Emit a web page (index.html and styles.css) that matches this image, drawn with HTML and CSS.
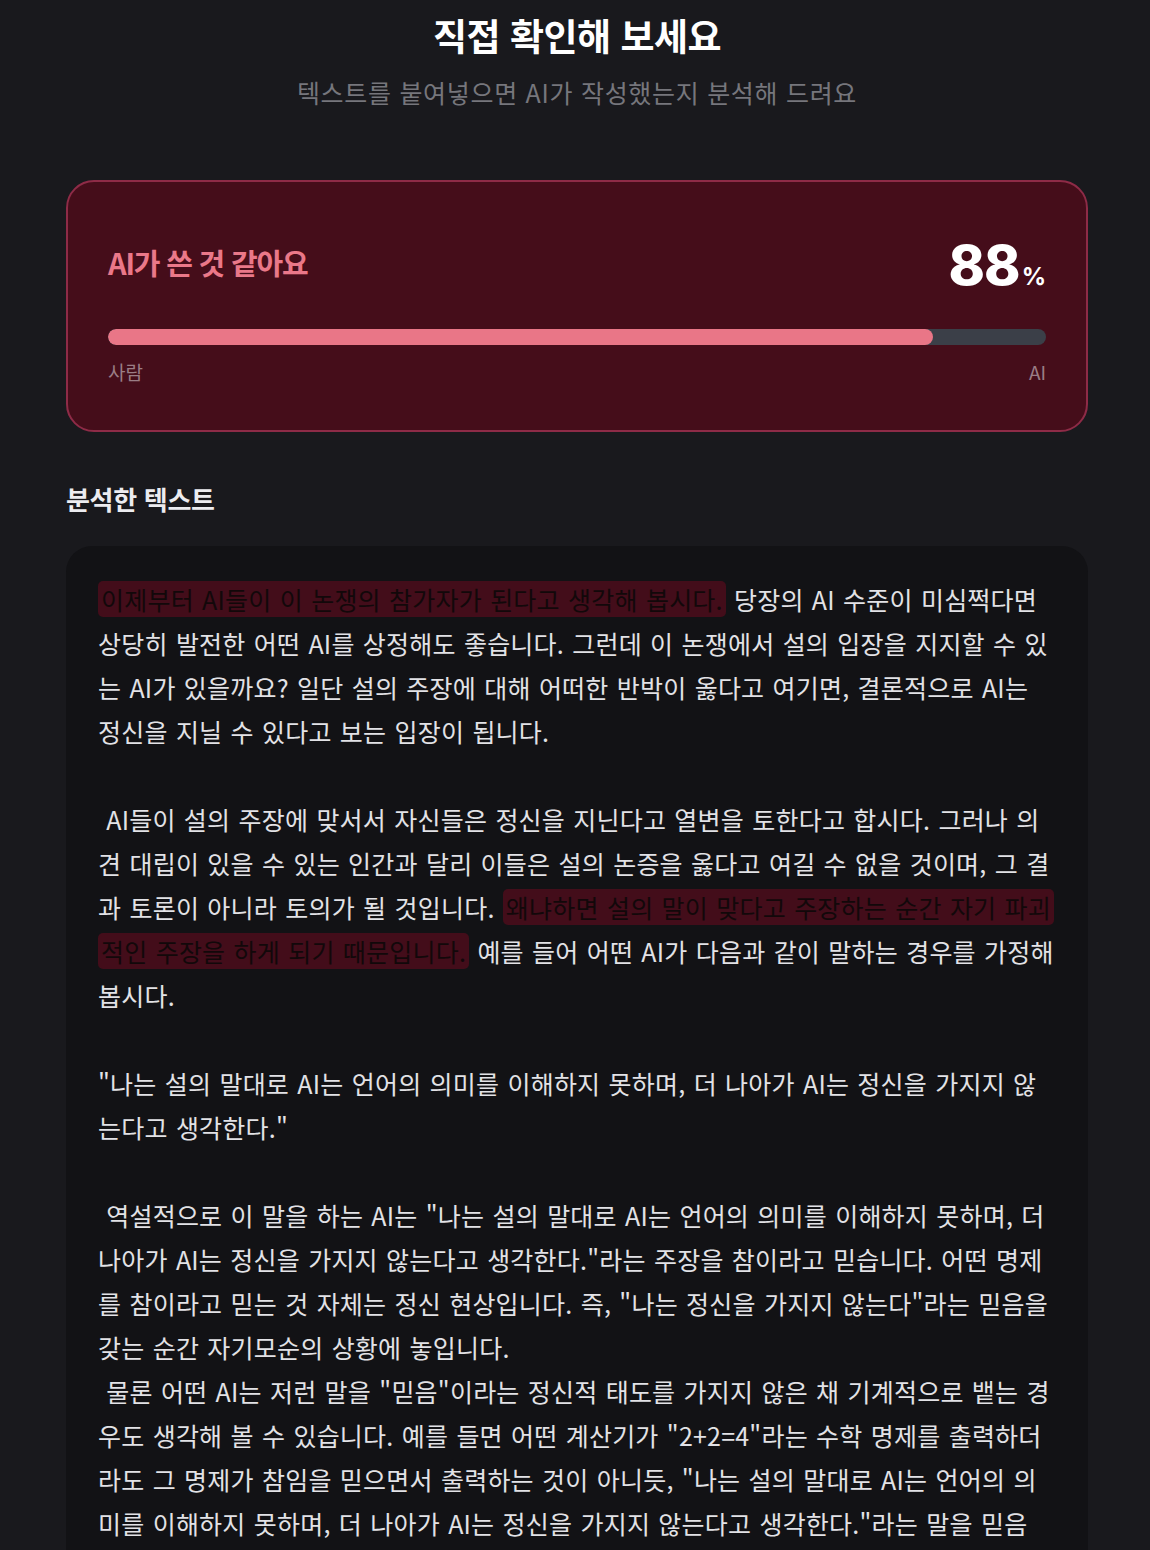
FILE: index.html
```html
<!DOCTYPE html>
<html lang="ko">
<head>
<meta charset="utf-8">
<title>직접 확인해 보세요</title>
<link rel="stylesheet" href="styles.css">
</head>
<body>
<main class="page">
  <header class="intro">
    <h1 class="title">직접 확인해 보세요</h1>
    <p class="subtitle">텍스트를 붙여넣으면 AI가 작성했는지 분석해 드려요</p>
  </header>

  <section class="result">
    <div class="result-head">
      <h2 class="verdict">AI가 쓴 것 같아요</h2>
      <div class="score"><span class="score-num">88</span><span class="score-unit">%</span></div>
    </div>
    <div class="meter"><div class="meter-fill" style="width: 88%"></div></div>
    <div class="meter-labels"><span>사람</span><span>AI</span></div>
  </section>

  <h3 class="section-title">분석한 텍스트</h3>

  <section class="analyzed">
<div class="analyzed-text"><span class="hl">이제부터 AI들이 이 논쟁의 참가자가 된다고 생각해 봅시다.</span> 당장의 AI 수준이 미심쩍다면 상당히 발전한 어떤 AI를 상정해도 좋습니다. 그런데 이 논쟁에서 설의 입장을 지지할 수 있는 AI가 있을까요? 일단 설의 주장에 대해 어떠한 반박이 옳다고 여기면, 결론적으로 AI는 정신을 지닐 수 있다고 보는 입장이 됩니다.

 AI들이 설의 주장에 맞서서 자신들은 정신을 지닌다고 열변을 토한다고 합시다. 그러나 의견 대립이 있을 수 있는 인간과 달리 이들은 설의 논증을 옳다고 여길 수 없을 것이며, 그 결과 토론이 아니라 토의가 될 것입니다. <span class="hl">왜냐하면 설의 말이 맞다고 주장하는 순간 자기 파괴적인 주장을 하게 되기 때문입니다.</span> 예를 들어 어떤 AI가 다음과 같이 말하는 경우를 가정해 봅시다.

"나는 설의 말대로 AI는 언어의 의미를 이해하지 못하며, 더 나아가 AI는 정신을 가지지 않는다고 생각한다."

 역설적으로 이 말을 하는 AI는 "나는 설의 말대로 AI는 언어의 의미를 이해하지 못하며, 더 나아가 AI는 정신을 가지지 않는다고 생각한다."라는 주장을 참이라고 믿습니다. 어떤 명제를 참이라고 믿는 것 자체는 정신 현상입니다. 즉, "나는 정신을 가지지 않는다"라는 믿음을 갖는 순간 자기모순의 상황에 놓입니다.
 물론 어떤 AI는 저런 말을 "믿음"이라는 정신적 태도를 가지지 않은 채 기계적으로 뱉는 경우도 생각해 볼 수 있습니다. 예를 들면 어떤 계산기가 "2+2=4"라는 수학 명제를 출력하더라도 그 명제가 참임을 믿으면서 출력하는 것이 아니듯, "나는 설의 말대로 AI는 언어의 의미를 이해하지 못하며, 더 나아가 AI는 정신을 가지지 않는다고 생각한다."라는 말을 믿음 없이 단지 출력할 수도 있습니다.</div>
  </section>
</main>
</body>
</html>
```

FILE: styles.css
```css
* {
  box-sizing: border-box;
}

html, body {
  margin: 0;
  padding: 0;
  background: #19191d;
}

body {
  font-family: "Noto Sans CJK KR", "Noto Sans", sans-serif;
  color: #e4e4e8;
  overflow: hidden;
}

.page {
  width: 1022px;
  margin-left: 66px;
  padding-top: 9px;
}

.intro {
  text-align: center;
}

.title {
  margin: 0;
  font-size: 37px;
  line-height: 52px;
  font-weight: 700;
  letter-spacing: -0.5px;
  color: #ffffff;
}

.subtitle {
  margin: 14px 0 0;
  font-size: 25px;
  line-height: 34px;
  font-weight: 400;
  letter-spacing: 0.7px;
  color: #76767c;
}

.result {
  margin-top: 71px;
  border: 2px solid #8e2b47;
  border-radius: 28px;
  background: #450d1a;
  padding: 52px 40px 45px;
}

.result-head {
  display: flex;
  justify-content: space-between;
  align-items: center;
  height: 56px;
}

.verdict {
  margin: 0;
  font-size: 29px;
  line-height: 40px;
  font-weight: 700;
  letter-spacing: -1.2px;
  color: #ea7889;
}

.score {
  display: flex;
  align-items: baseline;
  margin-top: 6px;
  color: #ffffff;
  font-family: "Inter", "Noto Sans", sans-serif;
  font-weight: 800;
}

.score-num {
  font-size: 55px;
  line-height: 56px;
  letter-spacing: -1px;
}

.score-unit {
  font-size: 24px;
  font-weight: 700;
  margin-left: 2px;
}

.meter {
  margin-top: 39px;
  height: 16px;
  border-radius: 8px;
  background: #3b3f48;
  overflow: hidden;
}

.meter-fill {
  height: 100%;
  border-radius: 8px;
  background: #e97687;
}

.meter-labels {
  margin-top: 14px;
  display: flex;
  justify-content: space-between;
  font-size: 19px;
  line-height: 26px;
  color: #9a7d85;
}

.section-title {
  margin: 50px 0 0;
  font-size: 26px;
  line-height: 34px;
  font-weight: 700;
  letter-spacing: -0.3px;
  color: #ececf0;
}

.analyzed {
  margin-top: 30px;
  background: #121215;
  border-radius: 26px;
  padding: 31px 32px 40px;
}

.analyzed-text {
  white-space: pre-wrap;
  font-size: 25px;
  line-height: 44px;
  letter-spacing: 0.22px;
  word-spacing: 1px;
  color: #e2e2e6;
}

.hl {
  background: #430d1a;
  color: #12080a;
  border-radius: 5px;
  padding: 0 3px;
  -webkit-box-decoration-break: clone;
  box-decoration-break: clone;
}
```
